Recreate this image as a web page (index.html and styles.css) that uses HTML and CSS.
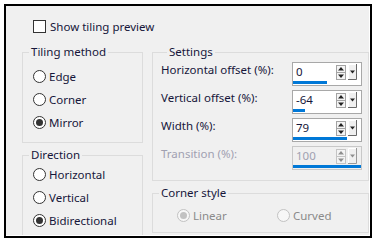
FILE: index.html
```html
<!DOCTYPE html>
<html>
<head>
    <title>Tiling</title>
    <meta charset="UTF-8">
    <link rel="stylesheet" href="styles.css">
</head>
<body>
    <div class="frame">
        <div class="dialog">
            <label class="check-row"><span class="checkbox"></span>Show tiling preview</label>

            <div class="columns">
                <div class="col-left">
                    <fieldset class="group tiling">
                        <legend>Tiling method</legend>
                        <div class="radio-row"><span class="radio"></span>Edge</div>
                        <div class="radio-row"><span class="radio"></span>Corner</div>
                        <div class="radio-row"><span class="radio checked"></span>Mirror</div>
                    </fieldset>

                    <fieldset class="group direction">
                        <legend>Direction</legend>
                        <div class="radio-row"><span class="radio"></span>Horizontal</div>
                        <div class="radio-row"><span class="radio"></span>Vertical</div>
                        <div class="radio-row"><span class="radio checked"></span>Bidirectional</div>
                    </fieldset>
                </div>

                <div class="col-right">
                    <fieldset class="group settings">
                        <legend>Settings</legend>
                        <div class="setting-row">
                            <span class="setting-label">Horizontal offset (%):</span>
                            <div class="spin">
                                <div class="spin-top">
                                    <span class="spin-value">0</span>
                                    <svg class="spin-arrows" width="10" height="15" viewBox="0 0 10 15"><rect x="0.5" y="0.5" width="9" height="14" fill="#f4f4f4" stroke="#a3a3a3"/><line x1="0" y1="7.5" x2="10" y2="7.5" stroke="#a3a3a3"/><path d="M5 2 L8 5.5 H2Z" fill="#222"/><path d="M5 13 L8 9.5 H2Z" fill="#222"/></svg>
                                    <svg class="spin-drop" width="9" height="16" viewBox="0 0 9 16"><rect width="9" height="16" fill="#f0f0f0"/><path d="M0.5 15 V0.5 H8" stroke="#fff" fill="none"/><path d="M8.5 0 V15.5 H0" stroke="#696969" fill="none"/><path d="M2 6.5 H7 L4.5 9.5Z" fill="#222"/></svg>
                                </div>
                                <div class="spin-track"><div class="spin-fill" style="width: 50%"></div></div>
                            </div>
                        </div>
                        <div class="setting-row">
                            <span class="setting-label">Vertical offset (%):</span>
                            <div class="spin">
                                <div class="spin-top">
                                    <span class="spin-value">-64</span>
                                    <svg class="spin-arrows" width="10" height="15" viewBox="0 0 10 15"><rect x="0.5" y="0.5" width="9" height="14" fill="#f4f4f4" stroke="#a3a3a3"/><line x1="0" y1="7.5" x2="10" y2="7.5" stroke="#a3a3a3"/><path d="M5 2 L8 5.5 H2Z" fill="#222"/><path d="M5 13 L8 9.5 H2Z" fill="#222"/></svg>
                                    <svg class="spin-drop" width="9" height="16" viewBox="0 0 9 16"><rect width="9" height="16" fill="#f0f0f0"/><path d="M0.5 15 V0.5 H8" stroke="#fff" fill="none"/><path d="M8.5 0 V15.5 H0" stroke="#696969" fill="none"/><path d="M2 6.5 H7 L4.5 9.5Z" fill="#222"/></svg>
                                </div>
                                <div class="spin-track"><div class="spin-fill" style="width: 18%"></div></div>
                            </div>
                        </div>
                        <div class="setting-row">
                            <span class="setting-label">Width (%):</span>
                            <div class="spin">
                                <div class="spin-top">
                                    <span class="spin-value">79</span>
                                    <svg class="spin-arrows" width="10" height="15" viewBox="0 0 10 15"><rect x="0.5" y="0.5" width="9" height="14" fill="#f4f4f4" stroke="#a3a3a3"/><line x1="0" y1="7.5" x2="10" y2="7.5" stroke="#a3a3a3"/><path d="M5 2 L8 5.5 H2Z" fill="#222"/><path d="M5 13 L8 9.5 H2Z" fill="#222"/></svg>
                                    <svg class="spin-drop" width="9" height="16" viewBox="0 0 9 16"><rect width="9" height="16" fill="#f0f0f0"/><path d="M0.5 15 V0.5 H8" stroke="#fff" fill="none"/><path d="M8.5 0 V15.5 H0" stroke="#696969" fill="none"/><path d="M2 6.5 H7 L4.5 9.5Z" fill="#222"/></svg>
                                </div>
                                <div class="spin-track"><div class="spin-fill" style="width: 79%"></div></div>
                            </div>
                        </div>
                        <div class="setting-row disabled">
                            <span class="setting-label">Transition (%):</span>
                            <div class="spin">
                                <div class="spin-top">
                                    <span class="spin-value">100</span>
                                    <svg class="spin-arrows" width="10" height="15" viewBox="0 0 10 15"><rect x="0.5" y="0.5" width="9" height="14" fill="#f4f4f4" stroke="#c4c4c4"/><line x1="0" y1="7.5" x2="10" y2="7.5" stroke="#c4c4c4"/><path d="M5 2 L8 5.5 H2Z" fill="#8e8e8e"/><path d="M5 13 L8 9.5 H2Z" fill="#8e8e8e"/></svg>
                                    <svg class="spin-drop" width="9" height="16" viewBox="0 0 9 16"><rect width="9" height="16" fill="#f0f0f0"/><path d="M0.5 15 V0.5 H8" stroke="#fff" fill="none"/><path d="M8.5 0 V15.5 H0" stroke="#9a9a9a" fill="none"/><path d="M2 6.5 H7 L4.5 9.5Z" fill="#8e8e8e"/></svg>
                                </div>
                                <div class="spin-track"><div class="spin-fill" style="width: 100%"></div></div>
                            </div>
                        </div>
                    </fieldset>

                    <fieldset class="group corner">
                        <legend>Corner style</legend>
                        <div class="corner-options">
                            <div class="radio-row disabled"><span class="radio checked"></span>Linear</div>
                            <div class="radio-row disabled"><span class="radio"></span>Curved</div>
                        </div>
                    </fieldset>
                </div>
            </div>
        </div>
    </div>
</body>
</html>
```

FILE: styles.css
```css
body {
    margin: 0;
    background-color: #fff;
    font-family: "Noto Sans", "Liberation Sans", sans-serif;
    font-size: 11.5px;
    color: #16163a;
}

.frame {
    margin: 4px 0 0 4px;
    width: 364px;
    height: 230px;
    border: 2px solid #000;
}

.dialog {
    height: 100%;
    box-sizing: border-box;
    background-color: #f0f0f0;
    border-right: 1px solid #fff;
    border-bottom: 1px solid #fff;
    padding: 14px 0 0 16px;
    overflow: hidden;
}

.check-row {
    display: flex;
    align-items: center;
    gap: 4px;
    height: 13px;
    margin-left: 11px;
    line-height: 13px;
}

.checkbox {
    width: 13px;
    height: 13px;
    box-sizing: border-box;
    border: 1px solid #333;
    background-color: #fff;
}

.columns {
    display: flex;
    gap: 9px;
    margin-top: 11px;
}

.col-left {
    width: 121px;
    display: flex;
    flex-direction: column;
    gap: 4px;
}

.col-right {
    width: 217px;
    display: flex;
    flex-direction: column;
    gap: 4px;
}

/* Group boxes */
.group {
    margin: 0;
    padding: 0;
    min-width: 0;
    border: 1px solid #dcdcdc;
}

.group legend {
    margin-left: 6px;
    padding: 0 2px;
    line-height: 16px;
}

.tiling {
    padding: 5px 0 8px 0;
}

.direction {
    padding: 0 0 20px 0;
}

.settings {
    padding: 2px 6px 10px 8px;
    display: flex;
    flex-direction: column;
    gap: 4px;
}

.corner {
    padding: 3px 0 5px 0;
}

/* Radios */
.radio-row {
    display: flex;
    align-items: center;
    gap: 3px;
    height: 23px;
    padding-left: 10px;
}

.radio {
    position: relative;
    width: 13px;
    height: 13px;
    box-sizing: border-box;
    border: 1px solid #333;
    border-radius: 50%;
    background-color: #fff;
}

.radio.checked::after {
    content: "";
    position: absolute;
    left: 2px;
    top: 2px;
    width: 7px;
    height: 7px;
    border-radius: 50%;
    background-color: #333;
}

.radio-row.disabled {
    color: #8a8a8a;
}

.radio-row.disabled .radio {
    border-color: #c2c2c2;
    background-color: #f7f7f7;
}

.radio-row.disabled .radio.checked::after {
    background-color: #c2c2c2;
}

.corner-options {
    display: flex;
    padding-left: 14px;
}

.corner-options .radio-row {
    width: 90px;
}

/* Spin boxes */
.setting-row {
    display: flex;
    justify-content: space-between;
    align-items: flex-start;
    height: 24px;
}

.setting-label {
    line-height: 16px;
}

.spin {
    width: 70px;
    height: 24px;
    box-sizing: border-box;
    border: 1px solid #a8a8a8;
    background-color: #fff;
}

.spin-top {
    display: flex;
    align-items: center;
    height: 18px;
    padding-right: 4px;
}

.spin-value {
    flex: 1;
    padding-left: 3px;
    line-height: 18px;
}

.spin-arrows {
    margin-right: 2px;
}

.spin-track {
    height: 3px;
}

.spin-fill {
    height: 3px;
    background-color: #0078d7;
}

.setting-row.disabled {
    color: #a0a0b0;
}

.setting-row.disabled .spin {
    border-color: #c8c8c8;
    background-color: #f0f0f0;
}
```
